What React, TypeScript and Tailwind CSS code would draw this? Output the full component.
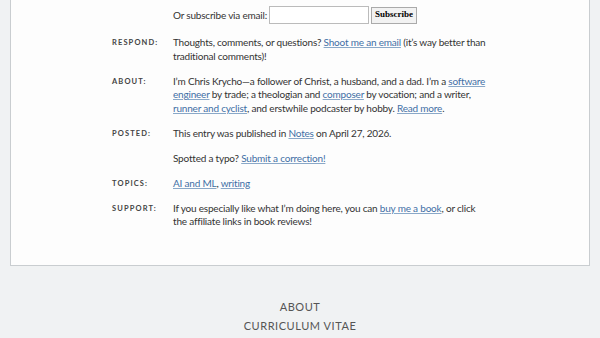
import React from "react";

const body = { fontFamily: "Lato, 'Open Sans', sans-serif" };

function Label({ children }: { children: React.ReactNode }) {
  return (
    <div className="w-[61px] shrink-0 pt-[1px] text-[7.5px] font-bold uppercase tracking-[0.15em] text-[#444]">
      {children}
    </div>
  );
}

function A({ children }: { children: React.ReactNode }) {
  return (
    <a href="#" className="text-[#3f6fa5] underline decoration-[#8aa8c8] underline-offset-[1px]">
      {children}
    </a>
  );
}

function Row({ label, children }: { label?: string; children: React.ReactNode }) {
  return (
    <div className="mb-[11.5px] flex">
      <Label>{label ? label + ":" : ""}</Label>
      <div className="text-[10px] leading-[13.5px] tracking-[-0.2px] text-[#333]">{children}</div>
    </div>
  );
}

export default function App() {
  return (
    <div className="min-h-[338px] bg-[#f0f2f3]" style={body}>
      <div className="mx-[10px] border border-t-0 border-[#c9cdd0] bg-[#fdfdfd] pb-[36px] pl-[101px] pt-[6px]">
        <div className="mb-[12px] flex items-center pl-[61px] text-[10px] tracking-[-0.2px] text-[#333]">
          <span>Or subscribe via email:</span>
          <input className="ml-[2px] h-[18px] w-[100px] border border-[#bbb] bg-white" />
          <button className="ml-[2px] h-[17px] border border-[#aaa] bg-[#f2f2f2] px-[3px] text-[9px] font-bold tracking-normal text-black" style={{ fontFamily: "'Liberation Serif', serif" }}>
            Subscribe
          </button>
        </div>
        <Row label="Respond">
          Thoughts, comments, or questions? <A>Shoot me an email</A> (it’s way better than
          <br />
          traditional comments)!
        </Row>
        <Row label="About">
          I’m Chris Krycho—a follower of Christ, a husband, and a dad. I’m a <A>software</A>
          <br />
          <A>engineer</A> by trade; a theologian and <A>composer</A> by vocation; and a writer,
          <br />
          <A>runner and cyclist</A>, and erstwhile podcaster by hobby. <A>Read more</A>.
        </Row>
        <Row label="Posted">
          This entry was published in <A>Notes</A> on April 27, 2026.
        </Row>
        <Row>
          Spotted a typo? <A>Submit a correction!</A>
        </Row>
        <Row label="Topics">
          <A>AI and ML</A>, <A>writing</A>
        </Row>
        <div className="flex">
          <Label>Support:</Label>
          <div className="text-[10px] leading-[13.5px] tracking-[-0.2px] text-[#333]">
            If you especially like what I’m doing here, you can <A>buy me a book</A>, or click
            <br />
            the affiliate links in book reviews!
          </div>
        </div>
      </div>
      <div className="pt-[31px] text-center text-[11px] uppercase leading-[19px] tracking-[0.05em] text-[#555]" style={{ fontFamily: "Lato, sans-serif" }}>
        <div>About</div>
        <div>Curriculum Vitae</div>
      </div>
    </div>
  );
}
